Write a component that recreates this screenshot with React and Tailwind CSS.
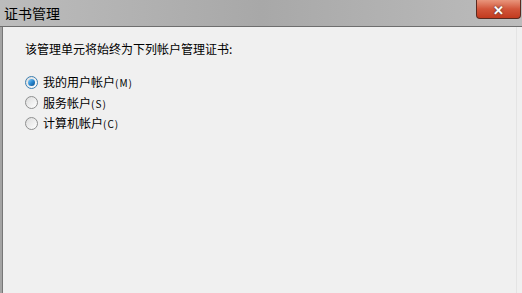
import { useState } from 'react';

const options = [
  { id: 'user', label: '我的用户帐户', key: 'M' },
  { id: 'service', label: '服务帐户', key: 'S' },
  { id: 'computer', label: '计算机帐户', key: 'C' },
];

const Radio = ({ checked }) => (
  <span
    className={`relative inline-flex items-center justify-center w-[13px] h-[13px] rounded-full border ${
      checked ? 'border-[#3c7fb1]' : 'border-[#8e8f8f]'
    } bg-gradient-to-br from-[#dcdcdc] to-[#ffffff]`}
  >
    {checked && (
      <span className="w-[7px] h-[7px] rounded-full bg-gradient-to-br from-[#8ad1f5] via-[#2a8ad4] to-[#0b4f8a]" />
    )}
  </span>
);

const App = () => {
  const [selected, setSelected] = useState('user');

  return (
    <div
      className="w-[522px] h-[293px] flex flex-col bg-[#f0f0f0] overflow-hidden"
      style={{ fontFamily: '"Noto Sans CJK SC", "Noto Sans", sans-serif' }}
    >
      {/* Title bar */}
      <div className="h-[27px] flex items-start justify-between bg-gradient-to-r from-[#bcbcbc] via-[#a8a8a8] to-[#bcbcbc] border-b border-[#6e6e6e]">
        <span className="pl-[4px] pt-[4px] text-[14px] leading-[18px] text-black">证书管理</span>
        <div className="w-[45px] h-[19px] mr-[1px] flex items-center justify-center rounded-b-[4px] border border-t-0 border-[#5a2a20] bg-gradient-to-b from-[#e8957c] via-[#d2553a] to-[#c23a1e]">
          <span className="text-white font-bold text-[13px] leading-none [text-shadow:0_0_2px_#333]">✕</span>
        </div>
      </div>

      <div className="flex flex-1">
        {/* Left frame edge */}
        <div className="w-[3px] bg-[#a4a4a4] border-r border-[#777]" />
        <div className="flex-1 pl-[22px] pt-[14px]">
          <p className="text-[12px] leading-[16px] text-black">该管理单元将始终为下列帐户管理证书:</p>
          <div className="mt-[15px] flex flex-col gap-[0.5px]">
            {options.map((o) => (
              <label
                key={o.id}
                className="flex items-center gap-[5px] h-[20px] text-[12px] text-black cursor-default"
                onClick={() => setSelected(o.id)}
              >
                <Radio checked={selected === o.id} />
                <span>
                  {o.label}
                  <span className="text-[10px] tracking-[1px]">({o.key})</span>
                </span>
              </label>
            ))}
          </div>
        </div>
        <div className="w-[6px] border-l border-[#e4e4e4] bg-[#f0f0f0]" />
      </div>
    </div>
  );
};

export default App;
